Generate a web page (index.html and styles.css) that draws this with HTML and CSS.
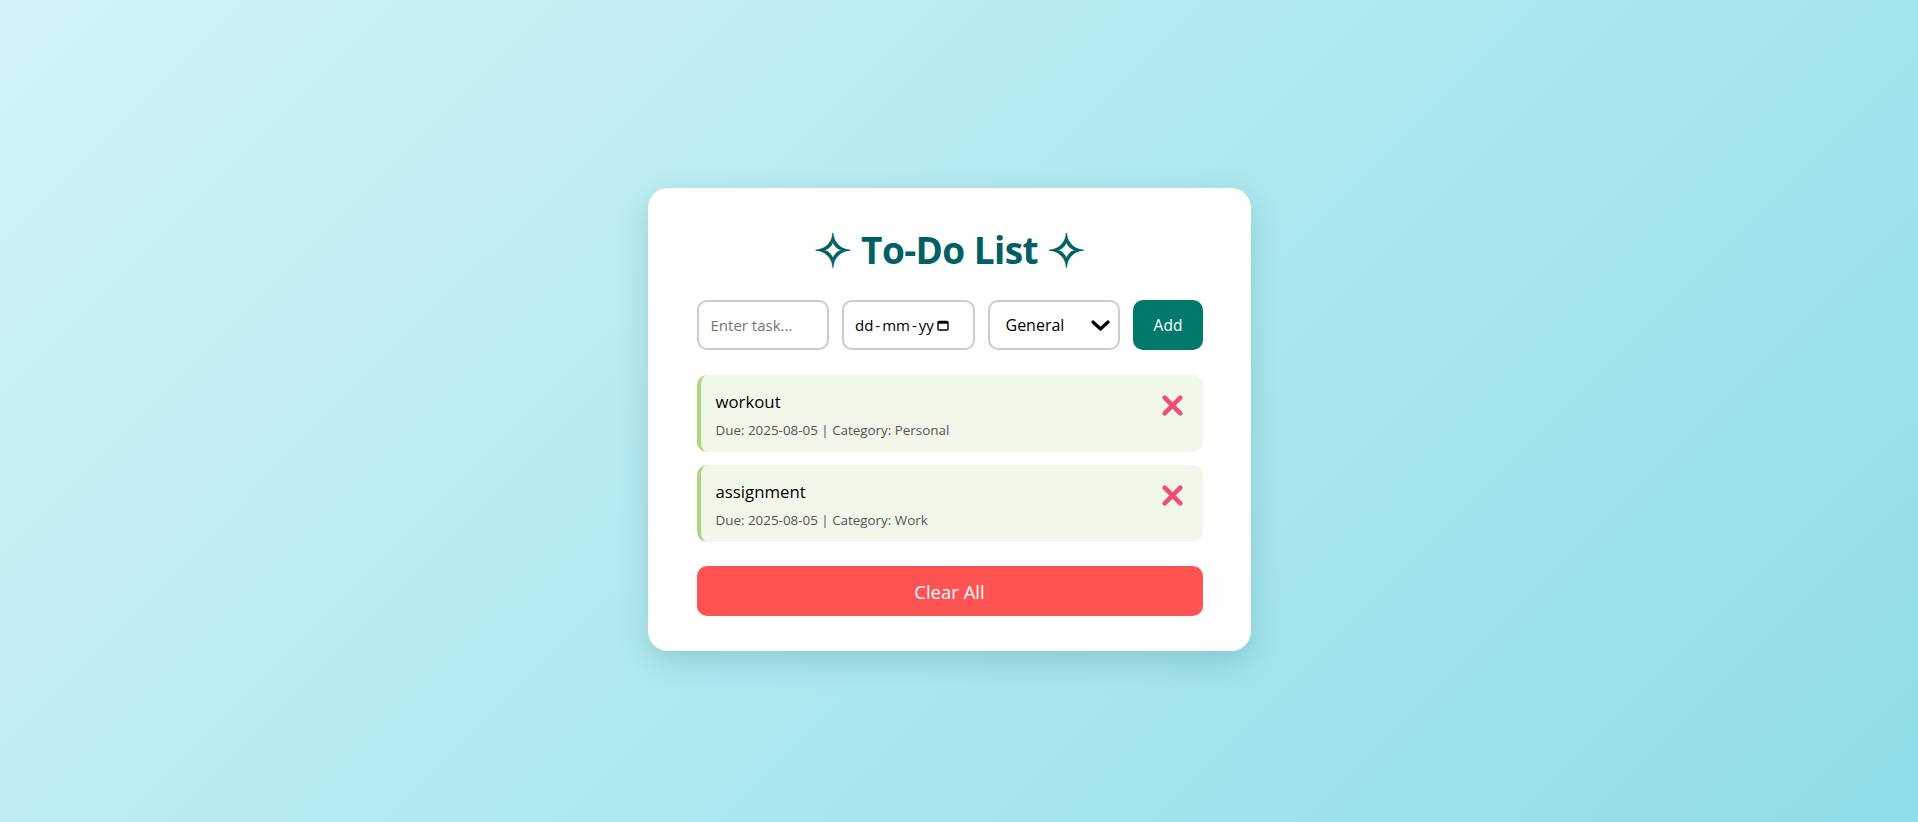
FILE: index.html
```html
<!DOCTYPE html>
<html lang="en">
<head>
<meta charset="utf-8">
<title>To-Do List</title>
<link rel="stylesheet" href="styles.css">
</head>
<body>
<main class="page">
  <section class="card">
    <h1 class="title"><span class="star">✧</span> To-Do List <span class="star">✧</span></h1>
    <div class="form">
      <input class="field task-input" type="text" placeholder="Enter task...">
      <div class="field date-field">
        <span class="date-text">dd<span class="sep">-</span>mm<span class="sep">-</span>yy</span>
        <svg class="cal" width="12" height="11" viewBox="0 0 12 11"><rect x="1" y="1.5" width="10" height="8.5" rx="1" fill="none" stroke="#000" stroke-width="1.4"/><rect x="1" y="1.5" width="10" height="2.2" fill="#000"/></svg>
      </div>
      <div class="field select-field">
        <span>General</span>
        <svg class="chev" width="19" height="11" viewBox="0 0 19 11"><polyline points="2,2 9.5,9 17,2" fill="none" stroke="#000" stroke-width="3.2" stroke-linecap="round" stroke-linejoin="round"/></svg>
      </div>
      <button class="add-btn">Add</button>
    </div>
    <ul class="list">
      <li class="item">
        <div class="item-body">
          <div class="item-name">workout</div>
          <div class="item-meta">Due: 2025-08-05 | Category: Personal</div>
        </div>
        <button class="del" aria-label="Delete"><svg width="23" height="23" viewBox="0 0 22 22"><path d="M3.5 3.5 L18.5 18.5 M18.5 3.5 L3.5 18.5" stroke="#f24d78" stroke-width="4.4" stroke-linecap="round"/></svg></button>
      </li>
      <li class="item">
        <div class="item-body">
          <div class="item-name">assignment</div>
          <div class="item-meta">Due: 2025-08-05 | Category: Work</div>
        </div>
        <button class="del" aria-label="Delete"><svg width="23" height="23" viewBox="0 0 22 22"><path d="M3.5 3.5 L18.5 18.5 M18.5 3.5 L3.5 18.5" stroke="#f24d78" stroke-width="4.4" stroke-linecap="round"/></svg></button>
      </li>
    </ul>
    <button class="clear-btn">Clear All</button>
  </section>
</main>
</body>
</html>
```

FILE: styles.css
```css
* { box-sizing: border-box; }
html, body { margin: 0; padding: 0; }
body {
  font-family: "Open Sans", "Noto Sans", sans-serif;
  background: linear-gradient(135deg, #d1f4f6 0%, #8edde8 100%);
  min-height: 100vh;
}
.page {
  min-height: 100vh;
  display: flex;
  align-items: center;
  justify-content: center;
  padding: 17px 19px 0 0;
}
.card {
  width: 603px;
  height: 463px;
  background: #fff;
  border-radius: 20px;
  padding: 0 48.5px;
  box-shadow: 0 10px 30px rgba(0, 80, 90, 0.18);
  display: flex;
  flex-direction: column;
}
.title {
  margin: 36px 0 0;
  height: 76px;
  line-height: 52px;
  text-align: center;
  font-size: 37px;
  font-weight: 700;
  color: #006064;
  letter-spacing: -0.6px;
  white-space: nowrap;
}
.star {
  font-family: "DejaVu Sans", sans-serif;
  font-weight: 400;
  font-size: 46px;
  line-height: 0;
  vertical-align: -3px;
  -webkit-text-stroke: 1.1px #006064;
  letter-spacing: 0;
}
.form {
  display: flex;
  gap: 13px;
  height: 50px;
}
.field {
  flex: none;
  width: 132.5px;
  height: 50px;
  border: 2px solid #cccccc;
  border-radius: 10px;
  background: #fff;
  font-family: "Open Sans", sans-serif;
  font-size: 15px;
  color: #000;
  margin: 0;
}
.task-input {
  padding: 0 12px;
  outline: none;
}
.task-input::placeholder { color: #757575; }
.date-field {
  display: flex;
  align-items: center;
  padding: 0 11px;
  gap: 3px;
}
.date-text { white-space: nowrap; }
.sep { margin: 0 2px; }
.cal { flex: none; }
.select-field {
  display: flex;
  align-items: center;
  justify-content: space-between;
  padding: 0 8px 0 16px;
  font-size: 16px;
}
.add-btn {
  flex: none;
  width: 70px;
  height: 50px;
  border: none;
  border-radius: 10px;
  background: #00796b;
  color: #fff;
  font-family: "Open Sans", sans-serif;
  font-size: 15.5px;
}
.list {
  list-style: none;
  margin: 25px 0 0;
  padding: 0;
  display: flex;
  flex-direction: column;
  gap: 13px;
}
.item {
  height: 77px;
  background: #f1f8e9;
  border-left: 4px solid #aed581;
  border-radius: 10px;
  padding: 15px 19px 13px 15px;
  display: flex;
  align-items: flex-start;
  justify-content: space-between;
}
.item-name {
  font-size: 16.8px;
  line-height: 24px;
  color: #000;
}
.item-meta {
  margin-top: 7px;
  font-size: 13.4px;
  line-height: 18px;
  color: #555;
}
.del {
  border: none;
  background: none;
  padding: 0;
  margin-top: 4px;
  width: 23px;
  height: 23px;
  display: flex;
}
.clear-btn {
  margin-top: 24px;
  height: 50px;
  width: 100%;
  border: none;
  border-radius: 10px;
  background: #ff5252;
  color: #fff;
  font-family: "Open Sans", sans-serif;
  font-size: 18.5px;
}
```
